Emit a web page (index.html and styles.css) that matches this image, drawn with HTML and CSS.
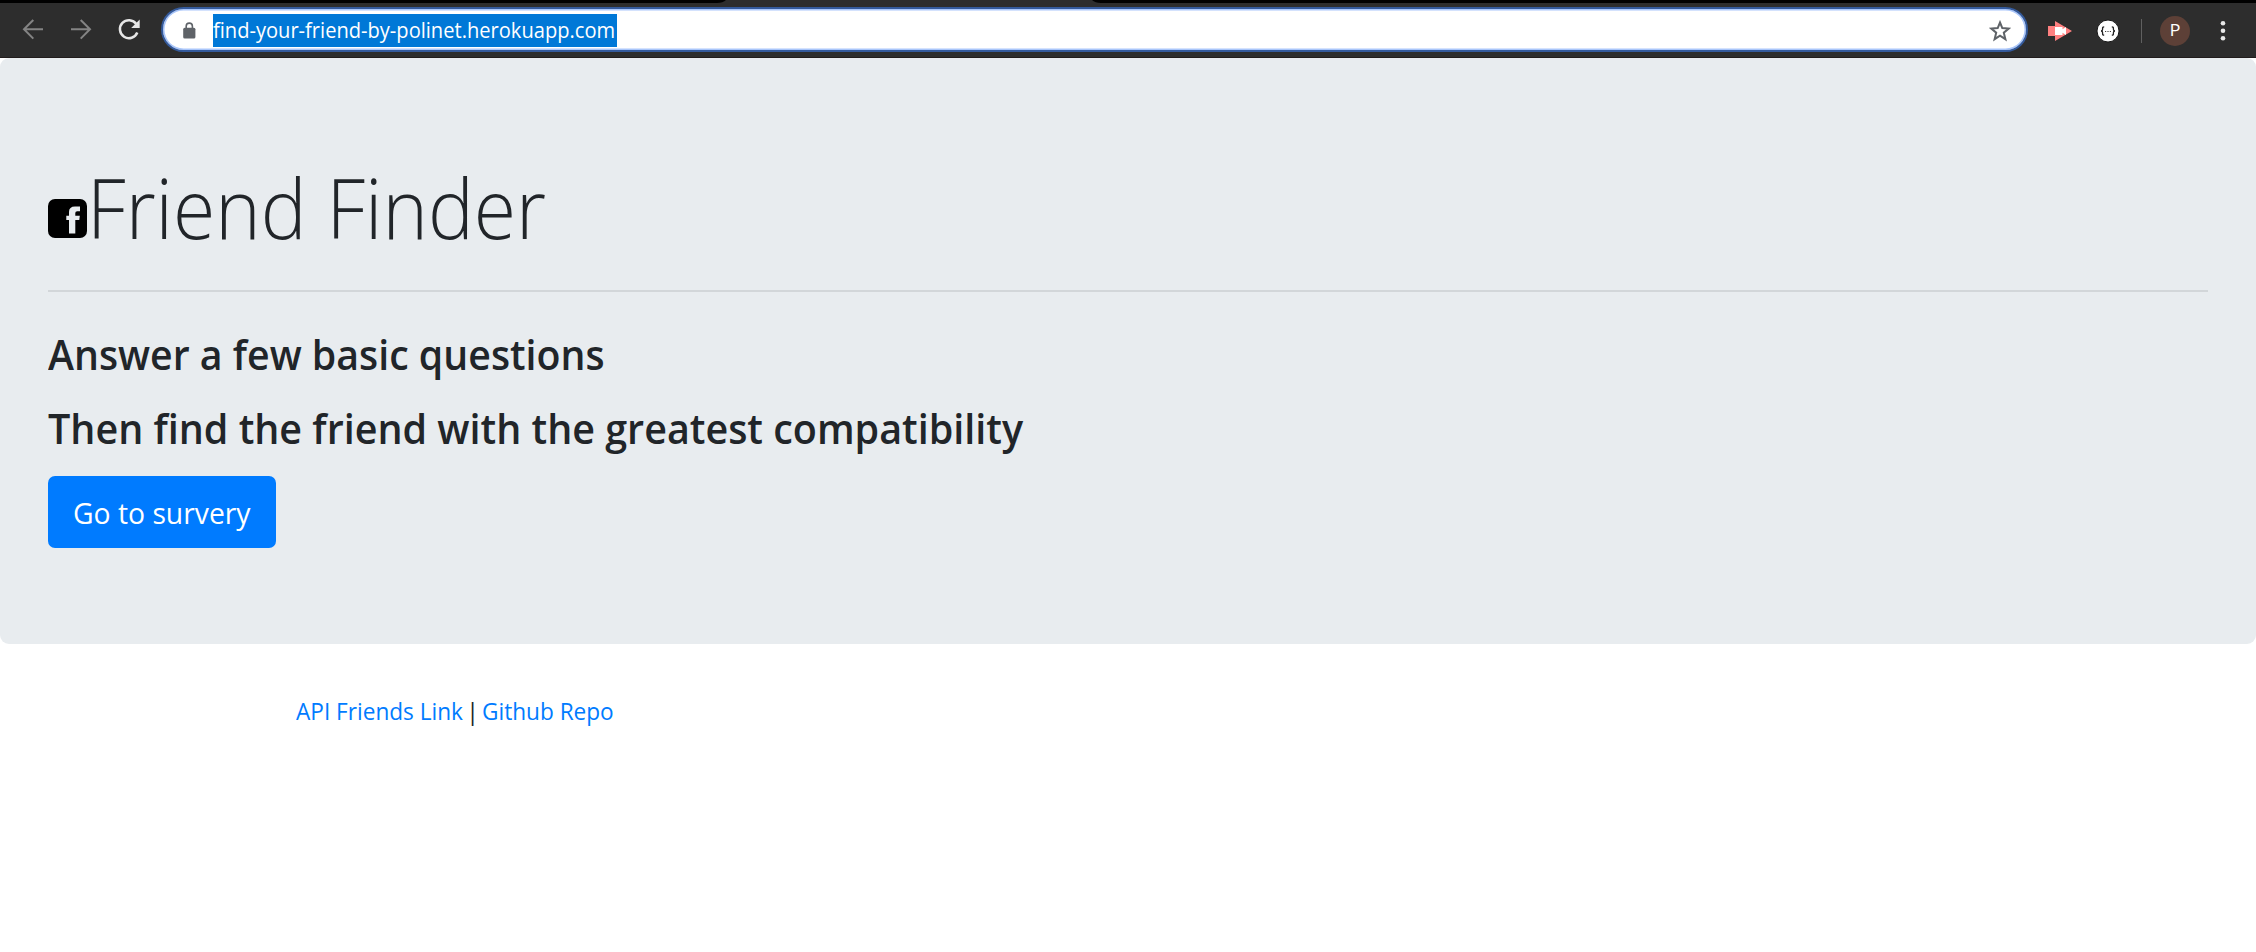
FILE: index.html
```html
<!DOCTYPE html>
<html lang="en">
<head>
<meta charset="utf-8">
<title>Friend Finder</title>
<link rel="stylesheet" href="styles.css">
</head>
<body>
<header class="browser">
  <div class="tabstrip"><svg class="tab" width="384" height="3" viewBox="0 0 384 3"><path d="M0 3Q6 3 9 0H375Q378 3 384 3Z" fill="#2d2d2d"/></svg></div>
  <div class="toolbar">
    <svg class="nav-icons" width="161" height="54" viewBox="0 3 161 54" fill="none" stroke-width="2">
      <path d="M43 29.3H24.5M33.3 20L24 29.3L33.3 38.6" stroke="#848484"/>
      <path d="M71 29.3H89.5M80.7 20L90 29.3L80.7 38.6" stroke="#848484"/>
      <path d="M136.3 24A9 9 0 1 0 137.3 32.5" stroke="#e6e6e6" stroke-width="2.5"/>
      <path d="M139.7 19.5V28H131.2Z" fill="#e6e6e6"/>
    </svg>
    <div class="omnibox">
      <svg class="lock" width="13" height="17" viewBox="0 0 13 17"><path d="M3.2 6V4.2a3.1 3.1 0 0 1 6.2 0V6" fill="none" stroke="#5f6368" stroke-width="1.6"/><rect x=".2" y="5.7" width="12.2" height="10.8" rx="1.5" fill="#5f6368"/></svg>
      <span class="url"><span class="fit">find-your-friend-by-polinet.herokuapp.com</span></span>
      <svg class="star" width="22" height="22" viewBox="0 0 22 22"><path d="M11 2.5L13.3 8.1L19.7 8.6L14.8 12.7L16.4 19.2L11 15.7L5.6 19.2L7.2 12.7L2.3 8.6L8.7 8.1Z" fill="none" stroke="#5f6368" stroke-width="2"/></svg>
    </div>
    <div class="extensions">
      <svg class="ext-arrow" width="24" height="20" viewBox="0 0 24 20"><path d="M0 5H7V0L24 10L7 20V15H0Z" fill="#ff8080"/><path d="M7 6H14.5V8.2L18 6V14L14.5 11.8V14H7Z" fill="#fff"/></svg>
      <svg class="ext-json" width="24" height="24" viewBox="0 0 24 24"><circle cx="12" cy="12" r="11" fill="#fff" stroke="#171717"/><path d="M8.2 7.8C6.3 7.8 6.6 9 6.6 10.3Q6.6 12 5 12Q6.6 12 6.6 13.7C6.6 15 6.3 16.2 8.2 16.2M15.8 7.8C17.7 7.8 17.4 9 17.4 10.3Q17.4 12 19 12Q17.4 12 17.4 13.7C17.4 15 17.7 16.2 15.8 16.2" fill="none" stroke="#222" stroke-width="1.3"/><path d="M9 12.5h1.2M11.4 12.5h1.2M13.8 12.5H15" stroke="#444" stroke-width="1.2"/></svg>
      <span class="divider"></span>
      <span class="avatar">P</span>
      <svg class="menu" width="6" height="22" viewBox="0 0 6 22" fill="#e8e8e8"><circle cx="3" cy="3.3" r="2.3"/><circle cx="3" cy="10.8" r="2.3"/><circle cx="3" cy="18.3" r="2.3"/></svg>
    </div>
  </div>
</header>
<main class="jumbotron">
  <h1 class="title">
    <svg class="logo" width="39" height="39" viewBox="0 0 39 39"><rect width="39" height="39" rx="7"/><path d="M21 34.5V21H18.3V16.7H21V13Q21 7.5 27 7.5H32V12.2H29.2Q27.3 12.2 27.3 14V16.7H31.8L31.3 21H27.3V34.5Z" fill="#e8ecef"/></svg><span class="fit">Friend Finder</span>
  </h1>
  <hr class="rule">
  <h2 class="lead"><span class="fit">Answer a few basic questions</span></h2>
  <h2 class="lead lead-second"><span class="fit">Then find the friend with the greatest compatibility</span></h2>
  <a class="button"><span class="fit">Go to survery</span></a>
</main>
<footer class="links"><a class="api"><span class="fit">API Friends Link</span></a><span class="bar">|</span><a class="repo"><span class="fit">Github Repo</span></a></footer>
</body>
</html>
```
FILE: styles.css
```css
* { box-sizing: border-box; }
body { margin: 0; background: #fff; color: #212529; font-family: "Open Sans", "Noto Sans", sans-serif; }
svg { display: block; flex: none; }
.fit { display: inline-block; transform-origin: 0 50%; }
.browser { height: 58px; background: #2d2d2d; border-bottom: 1px solid #211c1c; }
.tabstrip { height: 3px; background: #000; padding-left: 717px; }
.toolbar { display: flex; height: 54px; }
.omnibox { display: flex; align-items: center; width: 1867px; height: 45px; margin-top: 4px; padding-left: 18px; background: #fff; border: 2px solid #345a9c; border-radius: 23px; box-shadow: inset 0 0 0 1.5px #a9c6fb; }
.lock { margin: 2px 17px 0 2px; }
.url { height: 33px; margin-top: 2px; line-height: 32px; width: 404px; background: #0078d7; color: #fff; font-size: 21px; white-space: nowrap; }
.url .fit { transform: scaleX(.957); }
.star { margin-top: 2px; margin-left: auto; margin-right: 15px; }
.extensions { display: flex; align-items: center; flex: 1; padding-left: 20px; padding-top: 1px; }
.ext-json { margin-left: 24px; }
.divider { width: 1px; height: 24px; margin-left: 21px; background: #606060; }
.avatar { display: grid; place-items: center; width: 30px; height: 30px; margin-left: 18px; border-radius: 50%; background: #5d4037; color: #fff; font: 16px Roboto, sans-serif; }
.menu { margin-left: 30px; }
.jumbotron { height: 586px; padding: 96px 48px; background: #e8ecef; border-radius: 9px; }
.title { display: flex; height: 101px; margin: 0; font-size: 83px; font-weight: 300; line-height: 106px; white-space: nowrap; }
.title .fit { transform: scaleX(.927); }
.logo { margin-top: 45px; }
.rule { height: 2px; margin: 35px 0 0; border: 0; background: #d2d6d9; }
.lead { height: 50px; margin: 37px 0 0; font-size: 42px; font-weight: 600; line-height: 50px; white-space: nowrap; }
.lead .fit { transform: scaleX(.935); }
.lead-second { margin-top: 24px; }
.lead-second .fit { transform: scaleX(.94); }
.button { display: flex; align-items: center; width: 228px; height: 72px; margin-top: 23px; padding-left: 25px; border-radius: 7px; background: #007bff; color: #fff; font-size: 30px; white-space: nowrap; }
.button .fit { transform: scaleX(.943); }
.links { display: flex; padding: 49px 0 0 296px; font-size: 24px; line-height: 36px; white-space: nowrap; color: #212529; }
.links a { color: #007bff; }
.links .fit { transform: scaleX(.942); }
.api { width: 170px; }
.bar { width: 16px; }
```
